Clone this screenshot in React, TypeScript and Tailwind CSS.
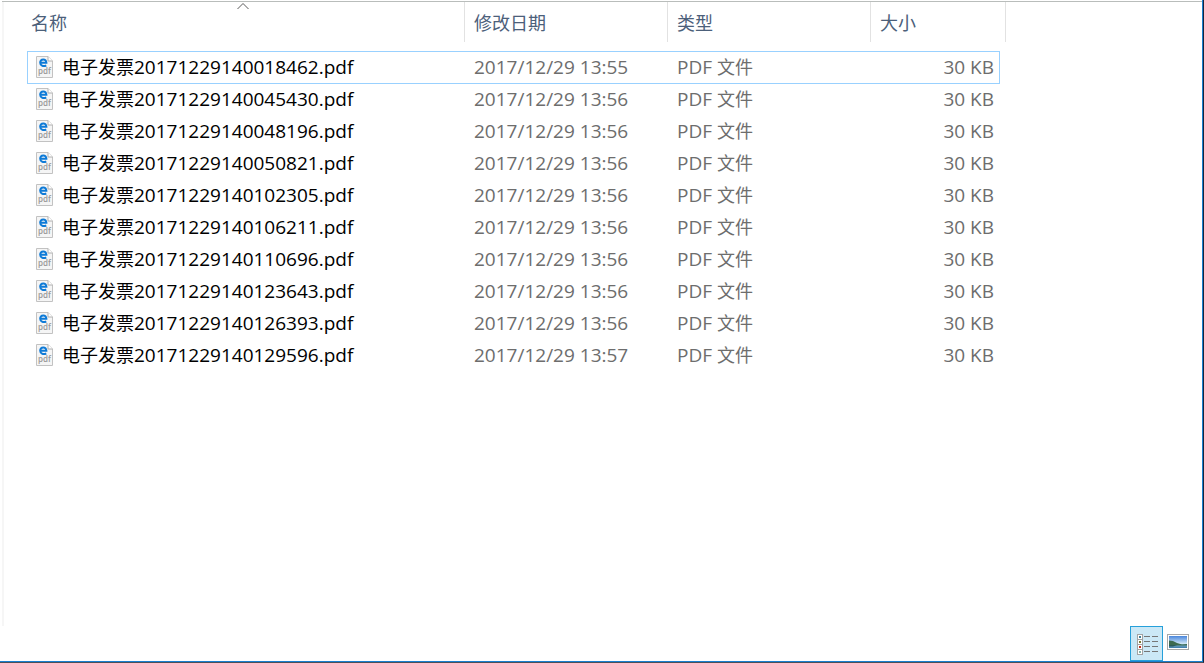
import React from 'react';

type FileRow = { id: string; modified: string };

const files: FileRow[] = [
  { id: '20171229140018462', modified: '2017/12/29 13:55' },
  { id: '20171229140045430', modified: '2017/12/29 13:56' },
  { id: '20171229140048196', modified: '2017/12/29 13:56' },
  { id: '20171229140050821', modified: '2017/12/29 13:56' },
  { id: '20171229140102305', modified: '2017/12/29 13:56' },
  { id: '20171229140106211', modified: '2017/12/29 13:56' },
  { id: '20171229140110696', modified: '2017/12/29 13:56' },
  { id: '20171229140123643', modified: '2017/12/29 13:56' },
  { id: '20171229140126393', modified: '2017/12/29 13:56' },
  { id: '20171229140129596', modified: '2017/12/29 13:57' },
];

function PdfIcon() {
  return (
    <svg className="h-[22px] w-[17px] shrink-0" viewBox="0 0 17 22" aria-hidden="true">
      <path d="M.5.5h11.5l4.5 4.5v16.500H.5z" fill="#f5f5f5" stroke="#c2c2c2" />
      <path d="M12 .5v4.500h4.500" fill="#fff" stroke="#b0b0b0" />
      <path
        d="M10.300 9.500C7 11 4.200 9.400 4.200 6.800C4.200 2.400 10.400 2.200 10.400 6.700H5"
        fill="none"
        stroke="#0f7bd7"
        strokeWidth="2"
      />
      <text
        x="8.500"
        y="18"
        textAnchor="middle"
        fontSize="8"
        fontWeight="600"
        fill="#999999"
        fontFamily="Open Sans, sans-serif"
      >
        pdf
      </text>
    </svg>
  );
}

function DetailsIcon() {
  const rows = [
    { y: 0, c: '#3a7d96' },
    { y: 5, c: '#7a7a35' },
    { y: 10, c: '#c02a1a' },
    { y: 15, c: '#7fb0a8' },
  ];
  return (
    <svg className="h-[21px] w-[21px]" viewBox="0 0 21 21" aria-hidden="true">
      {rows.map((r) => (
        <g key={r.y}>
          <rect x=".5" y={r.y + 0.5} width="5" height="5" fill="#fff" stroke="#a3a3a3" />
          <rect x="2" y={r.y + 2} width="2" height="2" fill={r.c} />
          <path d={`M7 ${r.y + 2.5}h6M15 ${r.y + 2.5}h6`} stroke="#767676" />
        </g>
      ))}
    </svg>
  );
}

function PictureIcon() {
  return (
    <svg className="h-4 w-[22px]" viewBox="0 0 22 16" aria-hidden="true">
      <defs>
        <linearGradient id="sky" x1="0" y1="0" x2="0" y2="1">
          <stop offset="0" stopColor="#4a86dc" />
          <stop offset="1" stopColor="#d3e9f8" />
        </linearGradient>
        <linearGradient id="water" x1="0" y1="0" x2="0" y2="1">
          <stop offset="0" stopColor="#8fbdd0" />
          <stop offset="1" stopColor="#3a78a8" />
        </linearGradient>
      </defs>
      <rect x=".5" y=".5" width="21" height="15" fill="#fff" stroke="#a8a8a8" />
      <rect x="2" y="2" width="18" height="8" fill="url(#sky)" />
      <rect x="2" y="10" width="18" height="4" fill="url(#water)" />
      <path d="M2 6.500l4 .5 4 2 5 1.500 5-.5v1.500H2z" fill="#3d6a50" />
      <path d="M2 11h8l-4 1.500H2z" fill="#2c5a58" />
    </svg>
  );
}

const headCell = 'relative h-10 border-r border-[#e2e2e2] p-0 text-left font-normal';
const headButton = 'block w-full px-[9px] pt-px text-left text-[18px] leading-6 text-[#4c607a]';

export default function App() {
  return (
    <div className="flex min-h-screen flex-col border-r border-b border-r-[#16253c] border-b-[#4a5058] bg-white font-['Open_Sans','Noto_Sans_CJK_SC',sans-serif]">
      <div className="flex flex-1 flex-col border-r border-b border-[#1a7fcf] pt-px">
        <main className="ml-[2px] flex flex-1 border-t border-[#b9bdbb]">
          <div className="flex-1 overflow-x-auto border-l-2 border-[#f6f6f6] pl-[18px]">
            <table className="w-[984px] table-fixed border-separate border-spacing-0">
              <colgroup>
                <col className="w-[5px]" />
                <col />
                <col className="w-[203px]" />
                <col className="w-[203px]" />
                <col className="w-[129px]" />
                <col className="w-[6px]" />
              </colgroup>
              <thead>
                <tr>
                  <th colSpan={2} className={headCell} aria-sort="ascending">
                    <svg className="absolute top-0 left-1/2 h-2 w-3 -translate-x-1/2" viewBox="0 0 12 8" aria-hidden="true">
                      <path d="M.5 7L6 1.500L11.500 7" fill="none" stroke="#5a5a5a" />
                    </svg>
                    <button type="button" className={headButton}>名称</button>
                  </th>
                  <th className={headCell}>
                    <button type="button" className={headButton}>修改日期</button>
                  </th>
                  <th className={headCell}>
                    <button type="button" className={headButton}>类型</button>
                  </th>
                  <th colSpan={2} className={headCell}>
                    <button type="button" className={headButton}>大小</button>
                  </th>
                </tr>
                <tr>
                  <td colSpan={6} className="h-[9px] p-0" />
                </tr>
              </thead>
              <tbody className="text-[19px] leading-[30px] whitespace-nowrap text-[#6d6d6d]">
                {files.map((f, i) => {
                  const focused = i === 0;
                  const line =
                    i < 2
                      ? 'border-t border-[#99d1ff] p-0 align-top'
                      : 'border-t border-transparent p-0 align-top';
                  return (
                    <tr key={f.id} className="h-8">
                      <td className="p-0" />
                      <td className={`${line} ${focused ? 'border-l' : ''}`}>
                        <div className={`flex items-center gap-[9px] text-black ${focused ? 'pl-2' : 'pl-[9px]'}`}>
                          <PdfIcon />
                          <span>
                            <span className="text-[18px]">电子发票</span>
                            {f.id}.pdf
                          </span>
                        </div>
                      </td>
                      <td className={line}>
                        <div className="pl-[9px]">{f.modified}</div>
                      </td>
                      <td className={line}>
                        <div className="pl-[9px]">
                          PDF <span className="text-[18px]">文件</span>
                        </div>
                      </td>
                      <td className={`${line} ${focused ? 'border-r' : ''}`}>
                        <div className={`text-right ${focused ? 'pr-[5px]' : 'pr-[6px]'}`}>30 KB</div>
                      </td>
                      <td className="p-0" />
                    </tr>
                  );
                })}
              </tbody>
            </table>
          </div>
        </main>
        <footer className="flex h-[35px] items-start justify-end gap-1 pr-[13px]">
          <button
            type="button"
            aria-label="详细信息"
            aria-pressed="true"
            className="flex h-[35px] w-[33px] items-center justify-center border border-[#26a0da] bg-[#cbe8f6] pt-0.5 pl-0.5"
          >
            <DetailsIcon />
          </button>
          <button type="button" aria-label="大缩略图" className="mt-2">
            <PictureIcon />
          </button>
        </footer>
      </div>
    </div>
  );
}
